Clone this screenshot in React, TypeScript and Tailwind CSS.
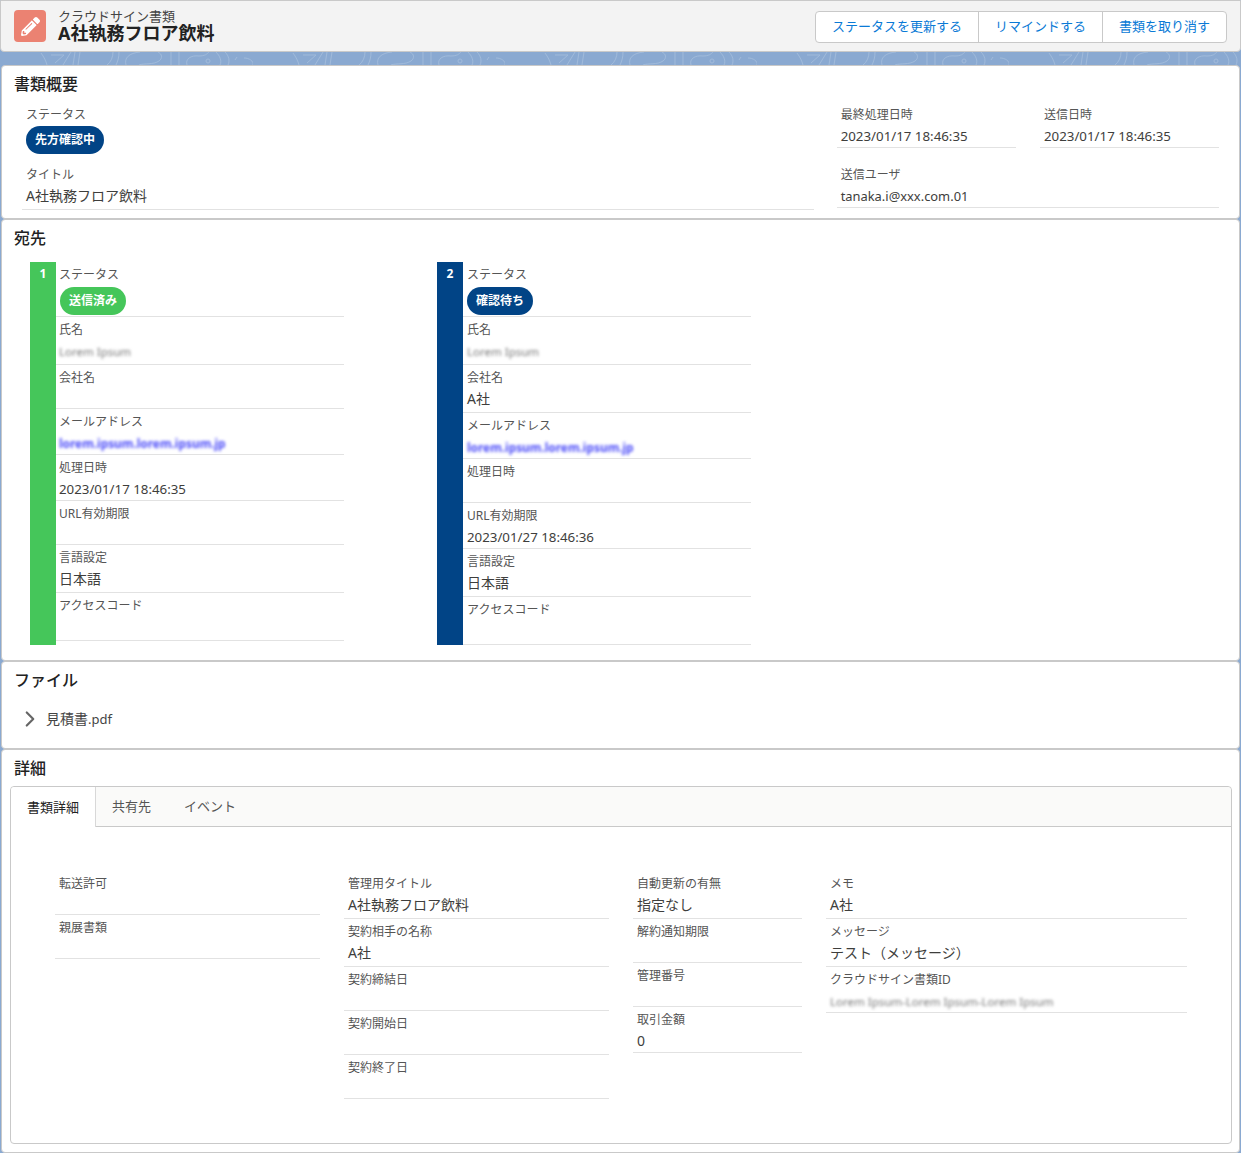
import { ReactNode } from "react"
import { FaPencilAlt } from "react-icons/fa"
import { ChevronRight } from "lucide-react"

type Row = { label: string; h: string; value?: ReactNode }

const Blur = ({ children, blue }: { children: string; blue?: boolean }) => (
  <span className={`inline-block blur-[1.4px] ${blue ? "text-[11.9px] font-bold text-[#4a4af8]" : "text-[11.5px] text-[#777]"}`}>{children}</span>
)

const Badge = ({ children, color }: { children: string; color: string }) => (
  <span className={`mt-[2px] inline-flex h-[28px] items-center rounded-full px-[9px] text-[12px] font-bold text-white ${color}`}>
    {children}
  </span>
)

// latin values sit narrower than CJK ones in the reference
const Latin = ({ children, size = "text-[13.3px]" }: { children: string; size?: string }) => <span className={size}>{children}</span>

function Field({ label, h, value, pad = "pl-[3px]" }: Row & { pad?: string }) {
  return (
    <div className={`border-b border-[#e2e2e2] pt-[4px] ${pad} ${h}`}>
      <div className="h-[18px] text-[12px] leading-[18px] text-[#555]">{label}</div>
      {value && <div className="mt-[1px] h-[22px] text-[14px] leading-[22px] text-[#3e3e3c]">{value}</div>}
    </div>
  )
}

const recipient1: Row[] = [
  { label: "ステータス", h: "h-[55px]", value: <Badge color="ml-px bg-[#45c65a]">送信済み</Badge> },
  { label: "氏名", h: "h-[48px]", value: <Blur>Lorem Ipsum</Blur> },
  { label: "会社名", h: "h-[44px]" },
  { label: "メールアドレス", h: "h-[46px]", value: <Blur blue>lorem.ipsum.lorem.ipsum.jp</Blur> },
  { label: "処理日時", h: "h-[46px]", value: <Latin>2023/01/17 18:46:35</Latin> },
  { label: "URL有効期限", h: "h-[44px]" },
  { label: "言語設定", h: "h-[48px]", value: "日本語" },
  { label: "アクセスコード", h: "h-[48px]" },
]

const recipient2: Row[] = [
  { label: "ステータス", h: "h-[55px]", value: <Badge color="bg-[#014486]">確認待ち</Badge> },
  { label: "氏名", h: "h-[48px]", value: <Blur>Lorem Ipsum</Blur> },
  { label: "会社名", h: "h-[48px]", value: "A社" },
  { label: "メールアドレス", h: "h-[46px]", value: <Blur blue>lorem.ipsum.lorem.ipsum.jp</Blur> },
  { label: "処理日時", h: "h-[44px]" },
  { label: "URL有効期限", h: "h-[46px]", value: <Latin>2023/01/27 18:46:36</Latin> },
  { label: "言語設定", h: "h-[48px]", value: "日本語" },
  { label: "アクセスコード", h: "h-[48px]" },
]

const detailColumns: { w: string; rows: Row[] }[] = [
  {
    w: "w-[265px]",
    rows: [
      { label: "転送許可", h: "h-[44px]" },
      { label: "親展書類", h: "h-[44px]" },
    ],
  },
  {
    w: "w-[265px]",
    rows: [
      { label: "管理用タイトル", h: "h-[48px]", value: "A社執務フロア飲料" },
      { label: "契約相手の名称", h: "h-[48px]", value: "A社" },
      { label: "契約締結日", h: "h-[44px]" },
      { label: "契約開始日", h: "h-[44px]" },
      { label: "契約終了日", h: "h-[44px]" },
    ],
  },
  {
    w: "w-[169px]",
    rows: [
      { label: "自動更新の有無", h: "h-[48px]", value: "指定なし" },
      { label: "解約通知期限", h: "h-[44px]" },
      { label: "管理番号", h: "h-[44px]" },
      { label: "取引金額", h: "h-[46px]", value: "0" },
    ],
  },
  {
    w: "w-[361px]",
    rows: [
      { label: "メモ", h: "h-[48px]", value: "A社" },
      { label: "メッセージ", h: "h-[48px]", value: "テスト（メッセージ）" },
      { label: "クラウドサイン書類ID", h: "h-[46px]", value: <Blur>Lorem Ipsum-Lorem Ipsum-Lorem Ipsum</Blur> },
    ],
  },
]

function Recipient({ no, color, rows, pad }: { no: number; color: string; rows: Row[]; pad: string }) {
  return (
    <div className="flex w-[314px]">
      <div className={`w-[26px] shrink-0 pt-[2px] text-center text-[12px] font-bold leading-[20px] text-white ${color}`}>{no}</div>
      <div className="flex-1">
        {rows.map((r) => (
          <Field key={r.label} {...r} pad={pad} />
        ))}
      </div>
    </div>
  )
}

const Card = ({ className, children }: { className: string; children: ReactNode }) => (
  <section className={`rounded-[4px] border border-[#c9c9c9] bg-white ${className}`}>{children}</section>
)

const Title = ({ children }: { children: string }) => (
  <h2 className="pl-[12px] pt-[6px] text-[16px] font-medium leading-[24px] text-[#222]">{children}</h2>
)

export default function App() {
  return (
    <div className="h-[1153px] w-[1241px] overflow-hidden bg-[#8aa9d1] px-px font-['Noto_Sans','Noto_Sans_CJK_JP',sans-serif]">
      <header className="-mx-px flex h-[52px] items-center rounded-b-[4px] border border-[#c9c9c9] bg-[#f3f3f3] px-[13px]">
        <div className="flex h-[32px] w-[32px] items-center justify-center rounded-[4px] bg-[#eb8272]">
          <FaPencilAlt className="text-[19px] text-white" />
        </div>
        <div className="ml-[12px]">
          <div className="text-[13px] leading-[13px] text-[#444]">クラウドサイン書類</div>
          <div className="mt-px text-[18px] font-bold leading-[18px] text-[#222]">A社執務フロア飲料</div>
        </div>
        <div className="ml-auto mt-[2px] flex h-[32px] rounded-[4px] border border-[#c9c9c9] bg-white text-[13px] text-[#0a7ad6]">
          <button className="w-[162px]">ステータスを更新する</button>
          <button className="w-[124px] border-l border-[#c9c9c9]">リマインドする</button>
          <button className="w-[124px] border-l border-[#c9c9c9]">書類を取り消す</button>
        </div>
      </header>

      {/* background texture strip */}
      <div className="h-[13px] overflow-hidden">
        <svg width="1240" height="13" fill="none">
          <defs>
            <pattern id="topo" width="252" height="13" patternUnits="userSpaceOnUse">
              <g stroke="#a0bada" strokeWidth="1">
                <path d="M40 1c3 4 5 8 6 12M50 3h13l-9 8M70 0l-8 13M74 0l-2 13M79 0l-2 13" />
                <path d="M112 0c0 5-2 10-6 13M118 0c0 5-1 9-3 13M125 13c-2-7 3-12 14-13M138 13c6-2 14 0 20-4 4-3 3-7-1-9" />
                <path d="M170 0v13M178 0v13M186 13c-2-6 4-10 12-9 6 0 8-2 10-4M215 0c4 4 6 9 4 13M224 0c4 4 5 9 3 13M236 5l-2 3M243 6c5 0 10 3 9 7" />
                <circle cx="207" cy="9" r="2" />
              </g>
            </pattern>
          </defs>
          <rect width="1240" height="13" fill="url(#topo)" />
        </svg>
      </div>

      <Card className="h-[154px]">
        <Title>書類概要</Title>
        <div className="mt-[10px] flex px-[20px]">
          <div className="w-[793px]">
            <div className="pl-[4px] text-[12px] leading-[18px] text-[#555]">ステータス</div>
            <div className="pl-[4px]">
              <Badge color="bg-[#014486]">先方確認中</Badge>
            </div>
            <div className="mt-[12px] pl-[4px] text-[12px] leading-[18px] text-[#555]">タイトル</div>
            <div className="mt-[1px] border-b border-[#e2e2e2] pb-[2px] pl-[4px] text-[14px] leading-[22px] text-[#3e3e3c]">A社執務フロア飲料</div>
          </div>
          <div className="ml-[23px] w-[383px]">
            <div className="flex justify-between">
              {["最終処理日時", "送信日時"].map((label) => (
                <div key={label} className="w-[179px]">
                  <div className="pl-[4px] text-[12px] leading-[18px] text-[#555]">{label}</div>
                  <div className="mt-[1px] h-[23px] border-b border-[#e2e2e2] pl-[4px] text-[14px] leading-[22px] text-[#3e3e3c]">
                    <Latin>2023/01/17 18:46:35</Latin>
                  </div>
                </div>
              ))}
            </div>
            <div className="mt-[18px] pl-[4px] text-[12px] leading-[18px] text-[#555]">送信ユーザ</div>
            <div className="mt-[1px] h-[23px] border-b border-[#e2e2e2] pl-[4px] text-[14px] leading-[22px] text-[#3e3e3c]">
              <Latin size="text-[12.9px]">tanaka.i@xxx.com.01</Latin>
            </div>
          </div>
        </div>
      </Card>

      <Card className="h-[442px]">
        <Title>宛先</Title>
        <div className="mt-[12px] flex gap-[93px] pl-[28px]">
          <Recipient no={1} color="bg-[#45c65a]" rows={recipient1} pad="pl-[3px]" />
          <Recipient no={2} color="bg-[#014486]" rows={recipient2} pad="pl-[4px]" />
        </div>
      </Card>

      <Card className="h-[88px]">
        <Title>ファイル</Title>
        <div className="mt-[14px] flex items-center text-[14px] leading-[24px] text-[#444]">
          <ChevronRight className="ml-[15px] mr-[3px] h-[26px] w-[26px] text-[#666]" strokeWidth={2} />
          見積書<Latin size="text-[13px]">.pdf</Latin>
        </div>
      </Card>

      <Card className="h-[404px]">
        <Title>詳細</Title>
        <div className="ml-[8px] mr-[7px] mt-[6px] h-[358px] rounded-[4px] border border-[#c9c9c9]">
          <div className="flex h-[40px] rounded-t-[4px] border-b border-[#c9c9c9] bg-[#fafaf9] text-[13px] text-[#555]">
            <div className="-mb-px flex h-[40px] w-[85px] items-center justify-center rounded-tl-[4px] border-r border-[#d8d8d8] bg-white pt-px text-[#222]">書類詳細</div>
            <div className="ml-[16px] flex items-center pt-px">共有先</div>
            <div className="ml-[33px] flex items-center pt-px">イベント</div>
          </div>
          <div className="flex gap-[24px] pl-[44px] pt-[44px]">
            {detailColumns.map((col, i) => (
              <div key={i} className={col.w}>
                {col.rows.map((r) => (
                  <Field key={r.label} {...r} pad="pl-[4px]" />
                ))}
              </div>
            ))}
          </div>
        </div>
      </Card>
    </div>
  )
}
